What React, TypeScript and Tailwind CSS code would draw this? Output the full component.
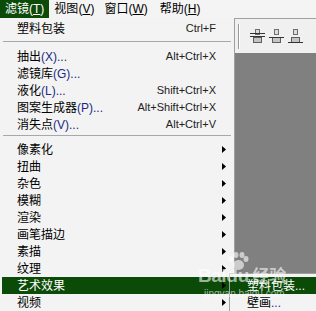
import React from "react";

type Item =
  | { kind: "item"; label: string; key?: string; shortcut?: string; arrow?: boolean; active?: boolean }
  | { kind: "sep"; big?: boolean };

const menuFont = { fontFamily: '"Liberation Sans", "Noto Sans CJK SC", sans-serif' };

const items: Item[] = [
  { kind: "item", label: "塑料包装", shortcut: "Ctrl+F" },
  { kind: "sep", big: true },
  { kind: "item", label: "抽出", key: "(X)...", shortcut: "Alt+Ctrl+X" },
  { kind: "item", label: "滤镜库", key: "(G)..." },
  { kind: "item", label: "液化", key: "(L)...", shortcut: "Shift+Ctrl+X" },
  { kind: "item", label: "图案生成器", key: "(P)...", shortcut: "Alt+Shift+Ctrl+X" },
  { kind: "item", label: "消失点", key: "(V)...", shortcut: "Alt+Ctrl+V" },
  { kind: "sep" },
  { kind: "item", label: "像素化", arrow: true },
  { kind: "item", label: "扭曲", arrow: true },
  { kind: "item", label: "杂色", arrow: true },
  { kind: "item", label: "模糊", arrow: true },
  { kind: "item", label: "渲染", arrow: true },
  { kind: "item", label: "画笔描边", arrow: true },
  { kind: "item", label: "素描", arrow: true },
  { kind: "item", label: "纹理", arrow: true },
  { kind: "item", label: "艺术效果", arrow: true, active: true },
  { kind: "item", label: "视频", arrow: true },
];

function Arrow() {
  return (
    <svg width="4" height="7" viewBox="0 0 4 7" className="shrink-0">
      <path d="M0 0 L4 3.5 L0 7 Z" fill="#000000" />
    </svg>
  );
}

function AlignIcon({ line }: { line: "top" | "mid" | "bottom" }) {
  const ly = line === "top" ? 5.5 : line === "mid" ? 9.5 : 14.5;
  return (
    <svg width="15" height="16" viewBox="0 0 15 16">
      <rect x="5.5" y="1.5" width="4" height="5" fill="#dcdcdc" stroke="#6e6e6e" />
      <rect x="3.5" y="9.5" width="8" height="5" fill="#c4c4c4" stroke="#5e5e5e" />
      <line x1="0" y1={ly} x2="15" y2={ly} stroke="#333333" />
      {line === "top" && <line x1="0" y1="8.5" x2="15" y2="8.5" stroke="#333333" />}
    </svg>
  );
}

function MenuBarItem({ label, k, active }: { label: string; k: string; active?: boolean }) {
  return (
    <div
      className={`flex h-[18px] items-center px-[5px] text-[12px] ${
        active ? "bg-[#0c4a08] text-white" : "text-black"
      }`}
    >
      {label}(<span className="underline">{k}</span>)
    </div>
  );
}

export default function App() {
  return (
    <div className="relative h-[311px] w-[316px] overflow-hidden bg-[#f3f3f3]" style={menuFont}>
      {/* menu bar */}
      <div className="flex h-[18px] bg-[#f4f4f4]">
        <MenuBarItem label="滤镜" k="T" active />
        <MenuBarItem label="视图" k="V" />
        <MenuBarItem label="窗口" k="W" />
        <div className="ml-[2px]">
          <MenuBarItem label="帮助" k="H" />
        </div>
      </div>

      <div className="flex">
        {/* filter menu */}
        <div className="w-[235px] shrink-0 border-r border-[#a0a0a0] bg-[#f3f3f3] pt-[2px]">
          {items.map((it, i) =>
            it.kind === "sep" ? (
              <div key={i} className={`flex px-[3px] ${it.big ? "h-[11px] pt-[4px]" : "h-[8px] pt-[2px]"}`}>
                <div className="h-px w-full bg-[#a8a8a8]" />
              </div>
            ) : (
              <div
                key={i}
                className={`mx-[2px] flex h-[17px] items-center pl-[15px] pr-[6px] text-[12px] ${
                  it.active ? "bg-[#0c4a08] text-white" : "text-black"
                }`}
              >
                <span className="leading-none">
                  {it.label}
                  {it.key && <span className="text-[#1a2a80]">{it.key}</span>}
                </span>
                <span className="flex-1" />
                {it.shortcut && (
                  <span className="mr-[10px] text-[11px] text-[#222]">{it.shortcut}</span>
                )}
                {it.arrow && <Arrow />}
              </div>
            )
          )}
        </div>

        {/* right workspace */}
        <div className="flex h-[293px] flex-1 flex-col">
          <div className="flex h-[35px] items-center border-t border-[#a0a0a0] bg-[#f0f0f0] pl-[3px]">
            <div className="mr-[10px] flex h-[25px]">
              <div className="w-px bg-[#9a9a9a]" />
              <div className="w-px bg-white" />
            </div>
            <div className="flex gap-[4px]">
              <AlignIcon line="top" />
              <AlignIcon line="mid" />
              <AlignIcon line="bottom" />
            </div>
          </div>
          <div className="flex-1 bg-[#808080]" />
        </div>
      </div>

      {/* submenu */}
      <div className="absolute left-[229px] top-[273px] w-[90px] border-l border-t border-[#a0a0a0] bg-[#f3f3f3] pt-[3px] text-[12px]">
        <div className="flex h-[17px] items-center bg-[#0c4a08] pl-[17px] text-white">塑料包装...</div>
        <div className="flex h-[17px] items-center pl-[17px] text-black">
          壁画<span className="text-[#3a1a90]">...</span>
        </div>
      </div>

      {/* watermark */}
      <div className="pointer-events-none absolute left-[198px] top-[266px] text-white/60">
        <div className="flex items-end">
          <span className="text-[19px] font-bold leading-none tracking-tight" style={{ fontFamily: '"Liberation Sans", sans-serif' }}>
            Bai
          </span>
          <span className="relative text-[19px] font-bold leading-none">
            <svg className="absolute -top-[14px] left-[1px]" width="22" height="20" viewBox="0 0 22 20">
              <ellipse cx="4" cy="7" rx="2.5" ry="3" fill="rgba(255,255,255,0.6)" />
              <ellipse cx="9" cy="3" rx="2.5" ry="3" fill="rgba(255,255,255,0.6)" />
              <ellipse cx="15" cy="3" rx="2.5" ry="3" fill="rgba(255,255,255,0.6)" />
              <ellipse cx="19" cy="7" rx="2.5" ry="3" fill="rgba(255,255,255,0.6)" />
              <ellipse cx="11.5" cy="13" rx="5.5" ry="5" fill="rgba(255,255,255,0.6)" />
            </svg>
            du
          </span>
          <span className="ml-[3px] text-[17px] font-bold leading-none">经验</span>
        </div>
        <div className="ml-[6px] mt-[4px] text-[10px] leading-none" style={{ fontFamily: '"Liberation Sans", sans-serif' }}>
          jingyan.baidu.com
        </div>
      </div>
    </div>
  );
}
